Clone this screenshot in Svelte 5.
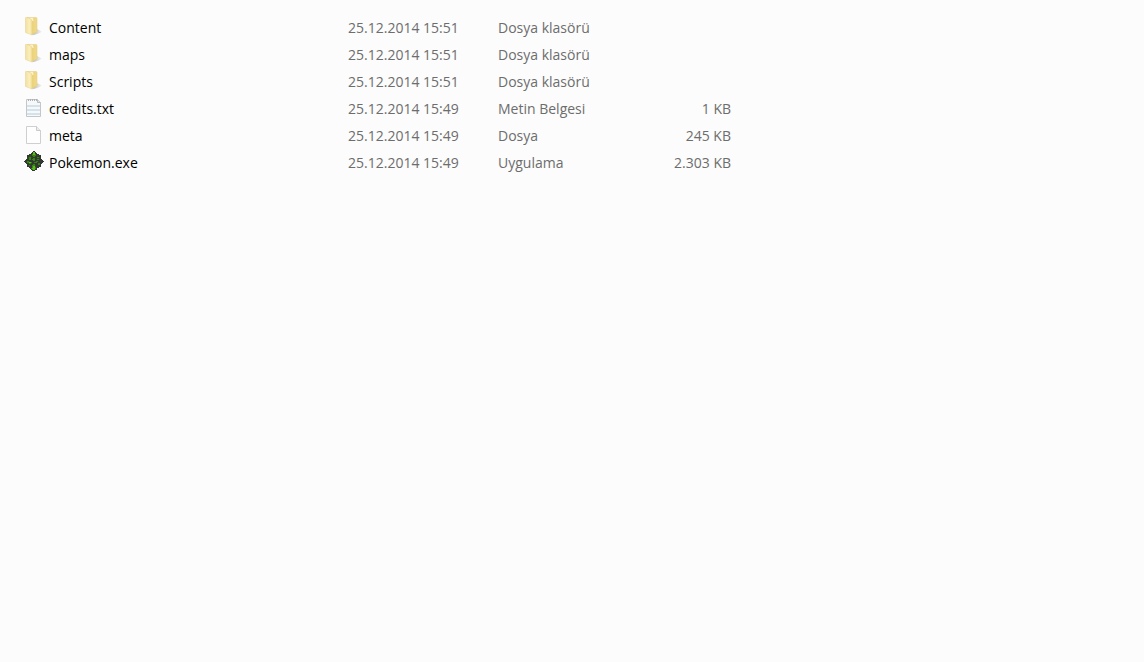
<script>
  const files = [
    { name: 'Content', icon: 'folder', date: '25.12.2014 15:51', type: 'Dosya klasörü', size: '' },
    { name: 'maps', icon: 'folder', date: '25.12.2014 15:51', type: 'Dosya klasörü', size: '' },
    { name: 'Scripts', icon: 'folder', date: '25.12.2014 15:51', type: 'Dosya klasörü', size: '' },
    { name: 'credits.txt', icon: 'text', date: '25.12.2014 15:49', type: 'Metin Belgesi', size: '1 KB' },
    { name: 'meta', icon: 'blank', date: '25.12.2014 15:49', type: 'Dosya', size: '245 KB' },
    { name: 'Pokemon.exe', icon: 'exe', date: '25.12.2014 15:49', type: 'Uygulama', size: '2.303 KB' }
  ];

  // Pixel art for the application icon, one letter per pixel
  const colors = { k: '#343834', d: '#24501a', g: '#34850f', l: '#5cba20' };
  const sprite = [
    '.........kk.........',
    '........kllk........',
    '.......kkllkk.......',
    '.....kkkgllgkkk.....',
    '...kkkdkggggkdkkk...',
    '...kkddkkggkkkkkk...',
    '...kdggdkkkkkggdk...',
    '...kkggkkggkkkkkk...',
    '..kkdggkgggkkggdkk..',
    '.kkkkkkkkggkkkkkkkk.',
    'kkdggdkkkkkkggdkkkkk',
    '.kkggllgkkgggkkkkkk.',
    '..kkkggdkkkkkkggkk..',
    '...kkkkkkggkkkggk...',
    '...kdgdkgggdkkkkk...',
    '...kkkkkglldkkkkk...',
    '.....kkkgllgkkk.....',
    '......kglllgk.......',
    '.......kgllkk.......',
    '........kkk.........'
  ];
</script>

<main>
  <table>
    <colgroup>
      <col class="col-name" />
      <col class="col-date" />
      <col class="col-type" />
      <col class="col-size" />
    </colgroup>
    <tbody>
      {#each files as file}
        <tr>
          <th scope="row">
            <div class="name">
              <svg viewBox="0 0 20 20" aria-hidden="true">
                {#if file.icon === 'folder'}
                  <defs>
                    <linearGradient id="front" x1="0" x2="1">
                      <stop offset="0" stop-color="#f3e0a0" />
                      <stop offset=".6" stop-color="#faeebb" />
                      <stop offset="1" stop-color="#f3df95" />
                    </linearGradient>
                    <linearGradient id="back" x1="0" x2="1">
                      <stop offset="0" stop-color="#d9b957" />
                      <stop offset=".5" stop-color="#ecd27a" />
                      <stop offset="1" stop-color="#efd98a" />
                    </linearGradient>
                    <linearGradient id="shadow" x1="0" x2="1">
                      <stop offset="0" stop-color="#a9a9a9" />
                      <stop offset="1" stop-color="#f2f2f2" />
                    </linearGradient>
                  </defs>
                  <path d="M8 19 L13 13 L18 15.5 Q16 17.5 8 19.3 Z" fill="url(#shadow)" opacity=".8" />
                  <path d="M3 1.5 L12 1.5 Q13 1.5 13 2.5 L13 16 L7.5 18.5 Z" fill="url(#back)" stroke="#e3c978" stroke-width=".5" />
                  <path d="M5 1.8 L9 1.8 L9.5 5 L8 5 Z" fill="#fbf3cf" />
                  <path d="M1.5 1.5 L4 1.5 L8 4 L8 19 L1.5 16.5 Z" fill="url(#front)" stroke="#e6d08a" stroke-width=".5" />
                {:else if file.icon === 'text'}
                  <path d="M2.5 2.5 H13.5 L16.5 5.5 V19.5 H2.5 Z" fill="#f6f8f9" stroke="#c3c7ca" />
                  <path d="M13.5 2.5 V5.5 H16.5" fill="#dfe2e4" stroke="#b9bdc0" />
                  <path d="M3 9 H16 M3 13 H16 M3 17 H16" stroke="#d3e2eb" stroke-width="2" />
                  <path d="M4.5 2 V4 M6.5 2 V4 M8.5 2 V4 M10.5 2 V4 M12.5 2 V4" stroke="#a9acae" stroke-width=".9" />
                {:else if file.icon === 'blank'}
                  <path d="M2.5 2.5 H12.5 L16.5 6.5 V19.5 H2.5 Z" fill="#fefefe" stroke="#cfcfcf" />
                  <path d="M12.5 2.5 V6.5 H16.5" fill="#ededed" stroke="#c9c9c9" />
                {:else}
                  <g shape-rendering="crispEdges">
                    {#each sprite as row, y}
                      {#each row.split('') as pixel, x}
                        {#if pixel !== '.'}
                          <rect {x} {y} width="1" height="1" fill={colors[pixel]} />
                        {/if}
                      {/each}
                    {/each}
                  </g>
                {/if}
              </svg>
              <span>{file.name}</span>
            </div>
          </th>
          <td>{file.date}</td>
          <td>{file.type}</td>
          <td class="size">{file.size}</td>
        </tr>
      {/each}
    </tbody>
  </table>
</main>

<style>
  :global(body) {
    margin: 0;
    background-color: #fcfcfc;
  }

  main {
    padding: 14px 24px;
    font-family: 'Open Sans', 'Noto Sans', sans-serif;
    font-size: 14px;
    line-height: 27px;
    color: #6d6d6d;
  }

  table {
    table-layout: fixed;
    width: 707px;
    max-width: 100%;
    border-collapse: collapse;
  }

  .col-name {
    width: 324px;
  }

  .col-date {
    width: 150px;
  }

  .col-type {
    width: 133px;
  }

  .col-size {
    width: 100px;
  }

  th,
  td {
    padding: 0;
    font-weight: normal;
    text-align: left;
    white-space: nowrap;
  }

  th {
    color: #000;
  }

  .name {
    display: flex;
    gap: 5px;
  }

  .name svg {
    width: 20px;
    height: 20px;
    margin-top: 2px;
    flex-shrink: 0;
  }

  .size {
    text-align: right;
  }
</style>
